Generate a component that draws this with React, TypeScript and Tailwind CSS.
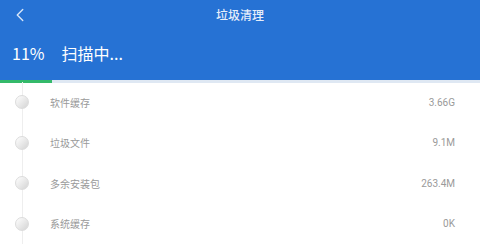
import { ChevronLeft } from 'lucide-react';

const items = [
    { name: '软件缓存', size: '3.66G' },
    { name: '垃圾文件', size: '9.1M' },
    { name: '多余安装包', size: '263.4M' },
    { name: '系统缓存', size: '0K' },
];

const font = { fontFamily: '"Noto Sans CJK SC", "Noto Sans", sans-serif' };

export default function App() {
    return (
        <div className="h-[250px] w-[480px] overflow-hidden bg-white" style={font}>
            <div className="h-[80px] bg-[#2672d4] text-white">
                <div className="relative flex h-[30px] items-center justify-center">
                    <ChevronLeft className="absolute left-[9px] top-[4px] h-[22px] w-[22px] text-[#d8e6f8]" strokeWidth={1.5} />
                    <span className="text-[12px] font-medium text-[#e6eefa]">垃圾清理</span>
                </div>
                <div className="flex h-[50px] items-center gap-[17px] pl-[12px] pb-[4px]">
                    <span className="text-[16px] leading-none">11%</span>
                    <span className="text-[16px] leading-none">扫描中...</span>
                </div>
            </div>
            <div className="h-[3px] bg-[#dfe8f3]">
                <div className="h-full w-[52px] bg-[#34b96a]" />
            </div>
            <div className="relative -mt-px">
                <div className="absolute left-[22px] top-0 h-full w-px bg-[#eeeeee]" />
                {items.map((it) => (
                    <div key={it.name} className="relative flex h-[40.5px] items-center pl-[15px] pr-[25px]">
                        <div className="h-[14px] w-[14px] rounded-full border border-[#dcdcdc] bg-gradient-to-br from-white to-[#d4d4d4]" />
                        <span className="ml-[21px] text-[10px] text-[#9a9a9a]">{it.name}</span>
                        <span className="ml-auto text-[10px] text-[#9a9a9a]" style={{ fontFamily: 'Roboto, sans-serif' }}>{it.size}</span>
                    </div>
                ))}
            </div>
        </div>
    );
}
